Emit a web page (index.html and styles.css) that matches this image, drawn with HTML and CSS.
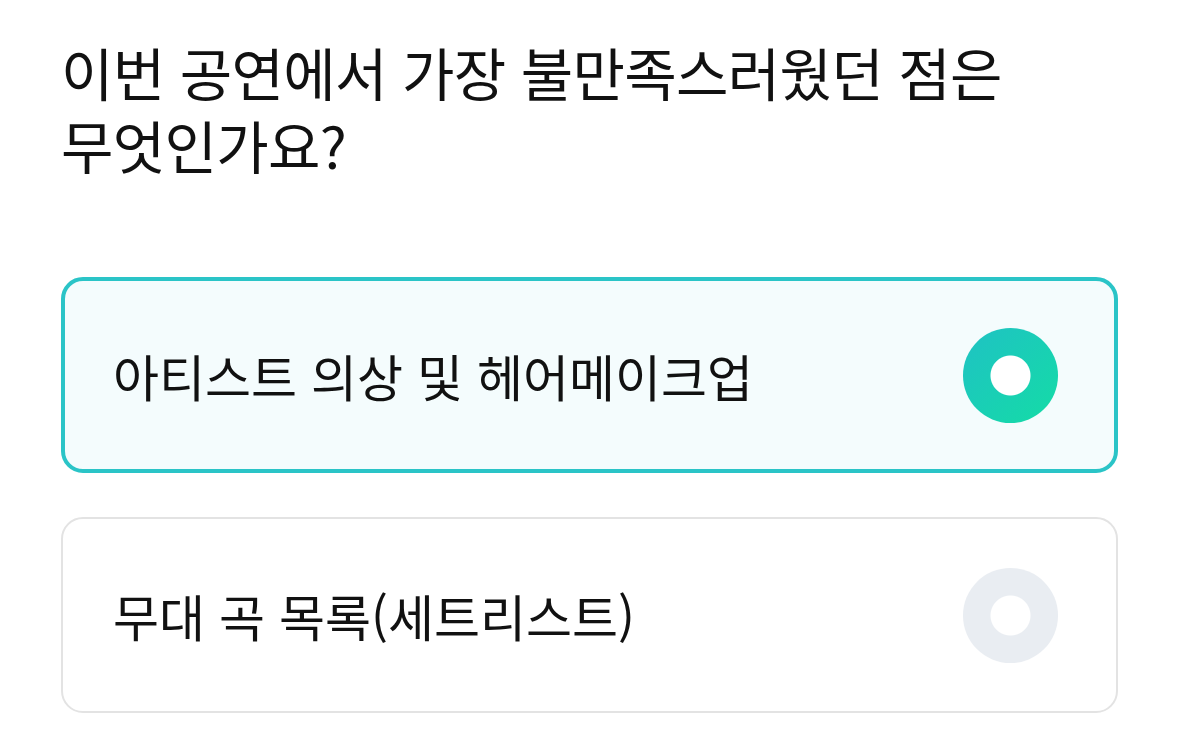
FILE: index.html
```html
<!DOCTYPE html>
<html lang="ko">
<head>
<meta charset="utf-8">
<title>설문</title>
<link rel="stylesheet" href="styles.css">
</head>
<body>
<main class="survey">
  <h1 class="question">
    <span class="question-line">이번 공연에서 가장 불만족스러웠던 점은</span>
    <span class="question-line">무엇인가요?</span>
  </h1>
  <ul class="options">
    <li class="option is-selected">
      <span class="option-label">아티스트 의상 및 헤어메이크업</span>
      <span class="radio"></span>
    </li>
    <li class="option">
      <span class="option-label">무대 곡 목록(세트리스트)</span>
      <span class="radio"></span>
    </li>
  </ul>
</main>
</body>
</html>
```
FILE: styles.css
```css
html, body {
  margin: 0;
  padding: 0;
  background: #ffffff;
}

body {
  font-family: "Noto Sans CJK KR", "Noto Sans", sans-serif;
  color: #111111;
}

.survey {
  padding: 35px 61px 0;
}

.question {
  margin: 0;
  font-size: 57px;
  font-weight: 400;
  letter-spacing: -0.7px;
  display: flex;
  flex-direction: column;
}

.question-line {
  display: block;
  height: 73px;
  line-height: 73px;
}

.options {
  list-style: none;
  margin: 96px 0 0;
  padding: 0;
  display: flex;
  flex-direction: column;
  gap: 44px;
}

.option {
  box-sizing: border-box;
  height: 196px;
  display: flex;
  align-items: center;
  justify-content: space-between;
  padding: 0 58px 0 50px;
  border: 2px solid #e3e3e3;
  border-radius: 22px;
  background: #ffffff;
}

.option.is-selected {
  border: 4px solid #2ac4c7;
  background: #f4fcfd;
  padding: 0 56px 0 48px;
}

.option-label {
  font-size: 50px;
  line-height: 1;
  letter-spacing: 0;
}

.radio {
  flex: none;
  width: 95px;
  height: 95px;
  border-radius: 50%;
  background: radial-gradient(circle, #ffffff 0 19.5px, transparent 20.5px), #e9edf2;
}

.is-selected .radio {
  background: radial-gradient(circle, #ffffff 0 19.5px, transparent 20.5px),
    linear-gradient(135deg, #1fc2c4 0%, #14dca6 100%);
}
```
